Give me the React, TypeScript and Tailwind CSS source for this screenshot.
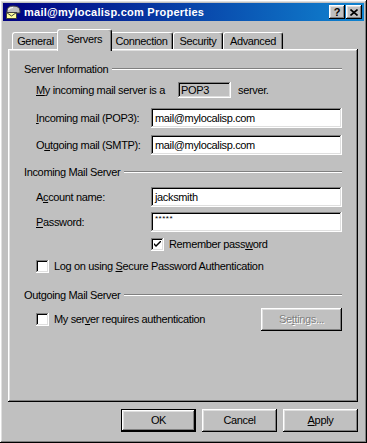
import React from 'react';

const raised =
  'shadow-[inset_-1px_-1px_#000,inset_1px_1px_#fff,inset_-2px_-2px_#808080,inset_2px_2px_#dfdfdf]';
const sunken =
  'shadow-[inset_-1px_-1px_#fff,inset_1px_1px_#808080,inset_-2px_-2px_#dfdfdf,inset_2px_2px_#000]';

const U: React.FC<{ children: React.ReactNode }> = ({ children }) => <span className="underline underline-offset-[1px]">{children}</span>;

const AccountIcon = () => (
  <svg width="16" height="16" viewBox="0 0 16 16" className="shrink-0">
    <path d="M2 7 Q2 2 8 2 Q15 2 15 7 L15 9 L2 9 Z" fill="#c0c0c0" stroke="#404040" strokeWidth="1" />
    <path d="M3.5 6 Q4 3.5 8 3.5" fill="none" stroke="#fff" strokeWidth="1" />
    <rect x="1.5" y="8.5" width="10" height="6" fill="#ffff9c" stroke="#404040" strokeWidth="1" />
    <path d="M1.5 8.5 L6.5 12 L11.5 8.5" fill="none" stroke="#404040" strokeWidth="1" />
  </svg>
);

const Tab: React.FC<{ label: string; width: number; active?: boolean }> = ({ label, width, active }) => (
  <div
    style={{ width: active ? width + 4 : width }}
    className={`flex items-center justify-center rounded-t-[3px] border-t border-l border-white bg-[#c0c0c0] shadow-[inset_-1px_0_#808080] border-r border-r-black ${
      active ? 'relative z-10 -mx-[2px] h-[22px] -mb-[2px] pb-[3px]' : 'h-[17px] pt-[1px]'
    }`}
  >
    {label}
  </div>
);

const Section: React.FC<{ title: string; className?: string }> = ({ title, className = '' }) => (
  <div className={`flex h-[14px] items-center gap-[4px] ${className}`}>
    <span className="whitespace-nowrap">{title}</span>
    <div className="h-[2px] flex-1 border-t border-b border-t-[#808080] border-b-white" />
  </div>
);

const Field: React.FC<{ label: React.ReactNode; value: string; className?: string; small?: boolean }> = ({ label, value, className = '', small }) => (
  <div className={`flex h-[20px] items-center pl-[12px] ${className}`}>
    <span className="w-[115px] shrink-0 whitespace-nowrap">{label}</span>
    <div className={`flex h-[20px] flex-1 bg-white pl-[4px] ${small ? 'items-start pt-[3px]' : 'items-center'} ${sunken}`}>
      <span className={small ? 'text-[8px] leading-[8px] tracking-[0.5px]' : ''}>{value}</span>
    </div>
  </div>
);

const Check: React.FC<{ checked?: boolean }> = ({ checked }) => (
  <div className={`flex h-[13px] w-[13px] shrink-0 items-center justify-center bg-white ${sunken}`}>
    {checked && (
      <svg width="7" height="7" viewBox="0 0 7 7">
        <path d="M0 2 L0 4 L2 6 L7 1 L7 -1 L2 4 Z" fill="#000" />
      </svg>
    )}
  </div>
);

const Button: React.FC<{ children: React.ReactNode; primary?: boolean }> = ({ children, primary }) => (
  <div
    className={`flex h-[23px] w-[75px] items-center justify-center bg-[#c0c0c0] ${raised} ${
      primary ? 'border border-black' : ''
    }`}
  >
    {children}
  </div>
);

export default function App() {
  return (
    <div
      className={`flex h-[443px] w-[367px] flex-col bg-[#c0c0c0] p-[3px] font-['Liberation_Sans',Arial,sans-serif] text-[11px] tracking-[-0.35px] text-black ${raised}`}
    >
      {/* title bar */}
      <div className="flex h-[18px] items-center bg-[linear-gradient(90deg,#000080,#1084d0)] px-[2px]">
        <AccountIcon />
        <span className="ml-[3px] text-[11px] font-bold tracking-[0.25px] text-white">mail@mylocalisp.com Properties</span>
        <div className="ml-auto flex gap-[1px]">
          <div className={`flex h-[14px] w-[16px] items-center justify-center bg-[#c0c0c0] text-[11px] font-bold leading-none ${raised}`}>?</div>
          <div className={`flex h-[14px] w-[16px] items-center justify-center bg-[#c0c0c0] ${raised}`}>
            <svg width="8" height="7" viewBox="0 0 8 7">
              <path d="M0.5 0.5 L7.5 6.5 M7.5 0.5 L0.5 6.5" stroke="#000" strokeWidth="1.6" />
            </svg>
          </div>
        </div>
      </div>

      <div className="flex flex-1 flex-col pl-[5px] pr-[6px] pt-[8px]">
        {/* tabs */}
        <div className="flex h-[20px] items-end pl-[4px]">
          <Tab label="General" width={47} />
          <Tab label="Servers" width={51} active />
          <Tab label="Connection" width={63} />
          <Tab label="Security" width={50} />
          <Tab label="Advanced" width={60} />
        </div>

        {/* panel */}
        <div className={`flex h-[353px] flex-col px-[16px] pt-[13px] ${raised}`}>
          <Section title="Server Information" />
          <div className="mt-[6px] flex h-[16px] items-center pl-[12px]">
            <span className="w-[142px] shrink-0 whitespace-nowrap">
              <U>M</U>y incoming mail server is a
            </span>
            <div className={`flex h-[16px] w-[53px] items-center pl-[3px] ${sunken}`}>POP3</div>
            <span className="ml-[7px]">server.</span>
          </div>
          <Field className="mt-[10px]" label={<><U>I</U>ncoming mail (POP3):</>} value="mail@mylocalisp.com" />
          <Field className="mt-[7px]" label={<>O<U>u</U>tgoing mail (SMTP):</>} value="mail@mylocalisp.com" />

          <Section title="Incoming Mail Server" className="mt-[10px]" />
          <Field className="mt-[8px]" label={<>A<U>c</U>count name:</>} value="jacksmith" />
          <Field className="mt-[5px]" label={<><U>P</U>assword:</>} value="*****" small />
          <div className="mt-[6px] flex h-[13px] items-center gap-[5px] pl-[127px]">
            <Check checked />
            <span>Remember pass<U>w</U>ord</span>
          </div>
          <div className="mt-[9px] flex h-[13px] items-center gap-[5px] pl-[12px]">
            <Check />
            <span>Log on using <U>S</U>ecure Password Authentication</span>
          </div>

          <Section title="Outgoing Mail Server" className="mt-[15px]" />
          <div className="mt-[6px] flex h-[23px] items-center gap-[5px] pl-[12px]">
            <Check />
            <span>My ser<U>v</U>er requires authentication</span>
            <div className={`ml-auto flex h-[23px] w-[81px] items-center justify-center text-[#808080] [text-shadow:1px_1px_#fff] ${raised}`}>
              <span>Se<U>t</U>tings...</span>
            </div>
          </div>
        </div>

        {/* buttons */}
        <div className="mt-[7px] flex justify-end gap-[6px]">
          <Button primary>OK</Button>
          <Button>Cancel</Button>
          <Button>
            <span><U>A</U>pply</span>
          </Button>
        </div>
      </div>
    </div>
  );
}
